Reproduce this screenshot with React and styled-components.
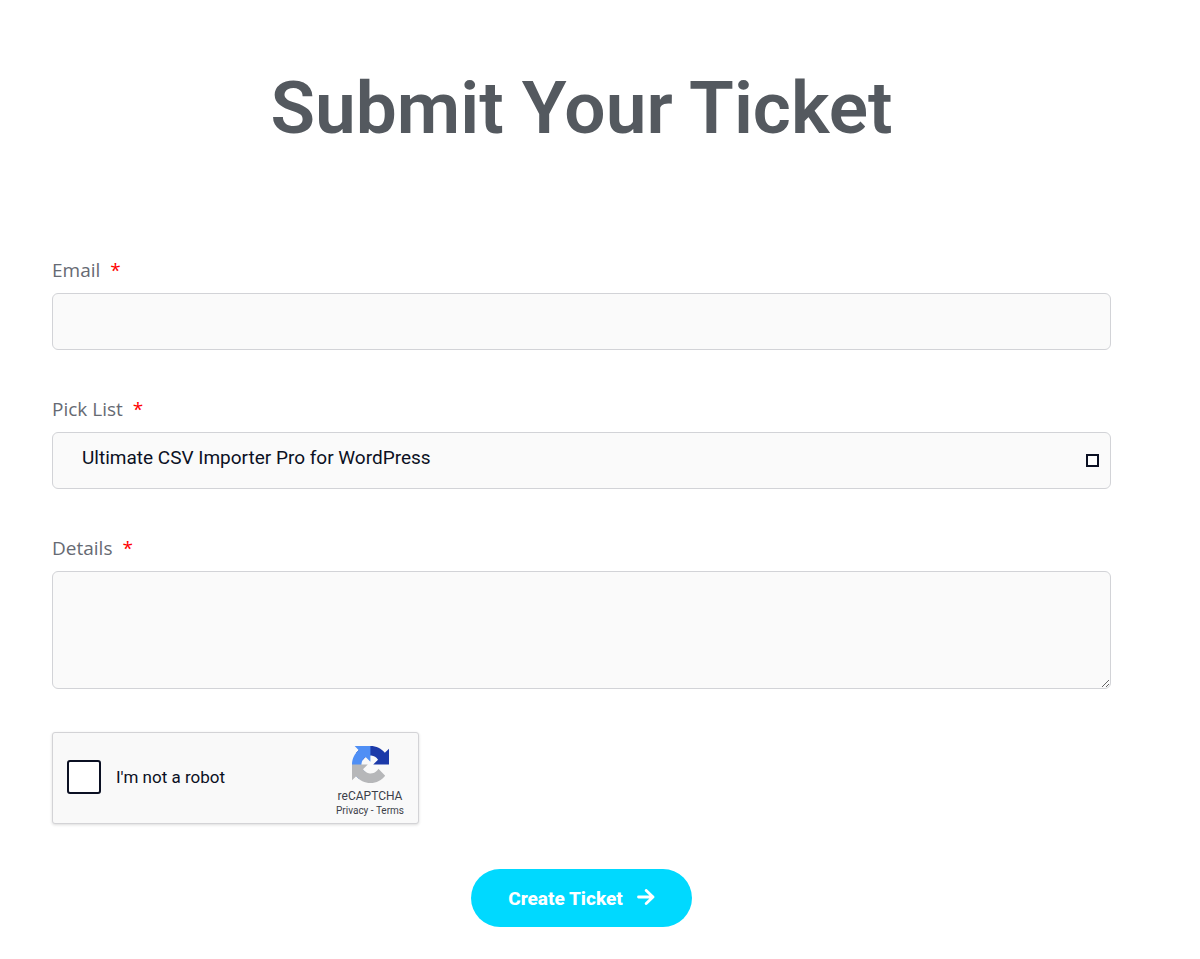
import React, { useState } from "react";
import styled, { createGlobalStyle } from "styled-components";

const products = [
  "Ultimate CSV Importer Pro for WordPress",
  "WP Leads Builder Pro",
  "Google SEO Pressor",
];

export default function App() {
  const [email, setEmail] = useState("");
  const [product, setProduct] = useState(products[0]);
  const [details, setDetails] = useState("");
  const [human, setHuman] = useState(false);

  return (
    <>
      <GlobalStyle />
      <Page>
        <Title>Submit Your Ticket</Title>
        <Form onSubmit={(e) => e.preventDefault()}>
          <Field>
            <Label htmlFor="email">
              Email <Required>*</Required>
            </Label>
            <Input
              id="email"
              type="email"
              value={email}
              onChange={(e) => setEmail(e.target.value)}
            />
          </Field>
          <Field>
            <Label htmlFor="product">
              Pick List <Required>*</Required>
            </Label>
            <SelectWrap>
              <Select
                id="product"
                value={product}
                onChange={(e) => setProduct(e.target.value)}
              >
                {products.map((name) => (
                  <option key={name}>{name}</option>
                ))}
              </Select>
              <SelectMark />
            </SelectWrap>
          </Field>
          <Field>
            <Label htmlFor="details">
              Details <Required>*</Required>
            </Label>
            <TextArea
              id="details"
              value={details}
              onChange={(e) => setDetails(e.target.value)}
            />
          </Field>
          <Captcha>
            <Checkbox
              id="human"
              type="checkbox"
              checked={human}
              onChange={(e) => setHuman(e.target.checked)}
            />
            <CaptchaLabel htmlFor="human">I'm not a robot</CaptchaLabel>
            <CaptchaBrand>
              <CaptchaLogo />
              <CaptchaName>reCAPTCHA</CaptchaName>
              <CaptchaLinks>
                <a href="#privacy">Privacy</a> - <a href="#terms">Terms</a>
              </CaptchaLinks>
            </CaptchaBrand>
          </Captcha>
          <SubmitButton type="submit">
            Create Ticket
            <ArrowIcon />
          </SubmitButton>
        </Form>
      </Page>
    </>
  );
}

function CaptchaLogo() {
  return (
    <svg width="37" height="37" viewBox="0 0 64 64" aria-hidden="true">
      <path
        fill="#1c3aa9"
        d="M64 31.955l-.033-1.37V4.687l-7.16 7.16C50.948 4.674 42.033.093 32.05.093c-10.4 0-19.622 4.96-25.458 12.64l11.736 11.86a15.55 15.55 0 0 1 4.754-5.334c2.05-1.6 4.952-2.906 8.968-2.906.485 0 .86.057 1.135.163 4.976.393 9.288 3.14 11.828 7.124l-8.307 8.307L64 31.953"
      />
      <path
        fill="#4f8ff5"
        d="M31.862.094l-1.37.033H4.594l7.16 7.16C4.58 13.147 0 22.06 0 32.046c0 10.4 4.96 19.622 12.64 25.458L24.5 45.768a15.55 15.55 0 0 1-5.334-4.754c-1.6-2.05-2.906-4.952-2.906-8.968 0-.485.057-.86.163-1.135.393-4.976 3.14-9.288 7.124-11.828l8.307 8.307L31.86.095"
      />
      <path
        fill="#b6b7b9"
        d="M.001 32.045l.033 1.37v25.898l7.16-7.16c5.86 7.173 14.774 11.754 24.76 11.754 10.4 0 19.622-4.96 25.458-12.64l-11.736-11.86a15.55 15.55 0 0 1-4.754 5.334c-2.05 1.6-4.952 2.906-8.968 2.906-.485 0-.86-.057-1.135-.163-4.976-.393-9.288-3.14-11.828-7.124l8.307-8.307c-10.522.04-22.4.066-27.295-.005"
      />
    </svg>
  );
}

function ArrowIcon() {
  return (
    <svg width="18" height="18" viewBox="0 0 18 18" aria-hidden="true">
      <path
        d="M1.5 8H16M9.2 1.4L16 8L9.2 14.6"
        fill="none"
        stroke="currentColor"
        strokeWidth="2.8"
        strokeLinecap="round"
        strokeLinejoin="round"
      />
    </svg>
  );
}

const GlobalStyle = createGlobalStyle`
  * {
    box-sizing: border-box;
  }
  body {
    margin: 0;
    background: #fff;
    font-family: Roboto, "Liberation Sans", sans-serif;
  }
`;

const Page = styled.main`
  padding: 64px 89px 32px 52px;
`;

const Title = styled.h1`
  margin: 0 0 105px;
  font-size: 73px;
  line-height: 88px;
  font-weight: 600;
  text-align: center;
  color: #54595f;
`;

const Form = styled.form`
  display: flex;
  flex-direction: column;
`;

const Field = styled.div`
  display: flex;
  flex-direction: column;
  gap: 10px;
  margin-bottom: 46px;
`;

const Label = styled.label`
  font-family: "Open Sans", sans-serif;
  font-size: 19px;
  line-height: 26px;
  color: #666a73;
`;

const Required = styled.span`
  margin-left: 5px;
  color: #f00;
`;

const Input = styled.input`
  width: 100%;
  height: 57px;
  padding: 0 29px;
  border: 1px solid #d2d3d7;
  border-radius: 6px;
  background: #fafafa;
  color: #0b1023;
  font-family: inherit;
  font-size: 19px;
`;

const SelectWrap = styled.div`
  position: relative;
`;

const Select = styled(Input).attrs({ as: "select" })`
  display: block;
  padding-bottom: 6px;
  appearance: none;
`;

const SelectMark = styled.span`
  position: absolute;
  top: 22px;
  right: 12px;
  width: 13px;
  height: 13px;
  border: 2px solid #0b1023;
  background: #fff;
  pointer-events: none;
`;

const TextArea = styled(Input).attrs({ as: "textarea" })`
  height: 118px;
  padding: 14px 29px;
  resize: vertical;
`;

const Captcha = styled.div`
  display: flex;
  align-items: center;
  width: 367px;
  height: 92px;
  margin-top: -3px;
  padding: 0 14px 2px;
  border: 1px solid #d3d3d6;
  border-radius: 3px;
  background: #f9f9f9;
  box-shadow: 0 1px 3px rgba(0, 0, 0, 0.14);
`;

const Checkbox = styled.input`
  width: 34px;
  height: 34px;
  margin: 0 15px 0 0;
  border: 2px solid #0b1023;
  border-radius: 3px;
  background: #fff;
  appearance: none;

  &:checked {
    background: #4285f4;
  }
`;

const CaptchaLabel = styled.label`
  flex: 1;
  font-size: 17px;
  color: #0b1023;
`;

const CaptchaBrand = styled.div`
  display: flex;
  flex-direction: column;
  align-items: center;
  padding-top: 8px;
  color: #3c3f4a;
`;

const CaptchaName = styled.span`
  margin-top: 5px;
  font-size: 12px;
  line-height: 16px;
`;

const CaptchaLinks = styled.span`
  font-size: 10px;
  line-height: 13px;

  a {
    color: inherit;
    text-decoration: none;
  }
`;

const SubmitButton = styled.button`
  display: flex;
  align-items: center;
  justify-content: center;
  gap: 14px;
  align-self: center;
  height: 58px;
  margin-top: 45px;
  padding: 0 37px;
  border: 0;
  border-radius: 29px;
  background: #00d9ff;
  color: #fff;
  font-family: inherit;
  font-size: 19px;
  font-weight: 800;
  cursor: pointer;
`;
